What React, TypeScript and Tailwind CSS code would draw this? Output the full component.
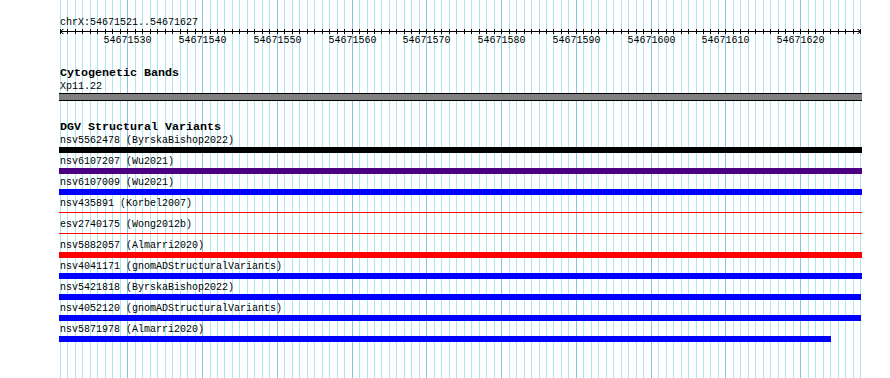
import React from 'react';

const START = 54671521;
const SPAN = 107; // bp shown
const LEFT = 60;
const WIDTH = 800;

const xOf = (k: number) => Math.round(LEFT + (k * WIDTH) / SPAN);

interface Variant {
  id: string;
  study: string;
  color: string;
  thin?: boolean;
  end?: number; // right edge in px
}

const variants: Variant[] = [
  { id: 'nsv5562478', study: 'ByrskaBishop2022', color: 'bg-black' },
  { id: 'nsv6107207', study: 'Wu2021', color: 'bg-[#4b0082]' },
  { id: 'nsv6107009', study: 'Wu2021', color: 'bg-[#0000ff]' },
  { id: 'nsv435891', study: 'Korbel2007', color: 'bg-[#ff0000]', thin: true },
  { id: 'esv2740175', study: 'Wong2012b', color: 'bg-[#ff0000]', thin: true },
  { id: 'nsv5882057', study: 'Almarri2020', color: 'bg-[#ff0000]' },
  { id: 'nsv4041171', study: 'gnomADStructuralVariants', color: 'bg-[#0000ff]' },
  { id: 'nsv5421818', study: 'ByrskaBishop2022', color: 'bg-[#0000ff]', end: 861 },
  { id: 'nsv4052120', study: 'gnomADStructuralVariants', color: 'bg-[#0000ff]', end: 861 },
  { id: 'nsv5871978', study: 'Almarri2020', color: 'bg-[#0000ff]', end: 831 },
];

const ticks = Array.from({ length: SPAN + 1 }, (_, k) => k);
const majors = ticks.filter((k) => (START + k) % 10 === 0 && k < SPAN);

const Grid: React.FC = () => (
  <svg className="absolute inset-0" width={890} height={378} shapeRendering="crispEdges">
    {ticks.map((k) => {
      const x = xOf(k) + 0.5;
      const major = (START + k) % 10 === 0;
      return (
        <line key={k} x1={x} x2={x} y1={0} y2={378} stroke={major ? '#84c6e8' : '#a8e8ee'} strokeWidth={1} />
      );
    })}
  </svg>
);

const Ruler: React.FC = () => (
  <div>
    <div className="pl-[60px] text-[10px] leading-[13px]">chrX:54671521..54671627</div>
    <svg width={890} height={5} className="block" shapeRendering="crispEdges">
      <line x1={60} x2={861} y1={2.5} y2={2.5} stroke="#000" />
      {ticks.map((k) => (
        <line key={k} x1={xOf(k) + 0.5} x2={xOf(k) + 0.5} y1={0} y2={5} stroke="#000" />
      ))}
      <path d="M64 -0.5 L60.5 2.5 L64 5.5" fill="none" stroke="#000" shapeRendering="auto" />
      <path d="M857 -0.5 L860.5 2.5 L857 5.5" fill="none" stroke="#000" shapeRendering="auto" />
    </svg>
    <div className="relative h-[13px] text-[10px] leading-[13px]">
      {majors.map((k) => (
        <span key={k} className="absolute top-0 w-[48px] text-center" style={{ left: xOf(k) - 24 + 0.5 }}>
          {START + k}
        </span>
      ))}
    </div>
  </div>
);

const Row: React.FC<{ v: Variant }> = ({ v }) => {
  const w = (v.end ?? 862) - 59;
  return (
    <div className="h-[21px]">
      <div className="pl-px text-[10px] leading-[13px]">
        {v.id} ({v.study})
      </div>
      {v.thin ? (
        <div className="h-[6px] pt-[2px]">
          <div className={`h-px ${v.color}`} style={{ width: w }} />
        </div>
      ) : (
        <div className={`h-[6px] ${v.color}`} style={{ width: w }} />
      )}
    </div>
  );
};

export default function App() {
  return (
    <div className="relative w-[890px] h-[378px] overflow-hidden bg-white text-black font-['Liberation_Mono',monospace]">
      <Grid />
      <div className="relative pt-[16px]">
        <Ruler />

        <div className="mt-[20px] pl-[59px]">
          <div className="pl-px text-[11.67px] leading-[13px] font-bold">Cytogenetic Bands</div>
          <div className="pl-px text-[10px] leading-[13px]">Xp11.22</div>
          <div className="w-[803px] h-[8px] border-y border-black bg-[#808080]" />
        </div>

        <div className="mt-[20px] pl-[59px]">
          <div className="pl-px text-[11.67px] leading-[13px] font-bold">DGV Structural Variants</div>
          {variants.map((v) => (
            <Row key={v.id} v={v} />
          ))}
        </div>
      </div>
    </div>
  );
}
